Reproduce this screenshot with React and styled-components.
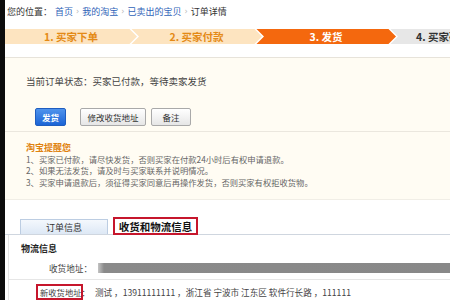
import React from "react";
import styled, { createGlobalStyle } from "styled-components";

const GlobalStyle = createGlobalStyle`
  html, body {
    margin: 0;
    padding: 0;
    background: #ffffff;
  }
  body {
    font-family: "Noto Sans CJK SC", "DejaVu Sans", sans-serif;
  }
`;

const Page = styled.div`
  width: 445px;
  height: 300px;
  overflow: hidden;
  border-left: 5px solid #0c0c0c;
  background: #ffffff;
  display: flex;
  flex-direction: column;
`;

const Crumbs = styled.div`
  height: 24px;
  padding: 0 2px;
  display: flex;
  align-items: center;
  gap: 3px;
  font-size: 9px;
  color: #333;
`;

const CrumbLink = styled.a`
  color: ${(p) => (p.current ? "#333" : "#2f63b8")};
  text-decoration: none;
`;

const Sep = styled.span`
  color: #b9b9b9;
  font-family: "DejaVu Sans", sans-serif;
  font-size: 8px;
`;

const Steps = styled.div`
  margin-top: 6px;
  height: 17px;
  display: flex;
  overflow: hidden;
`;

const Step = styled.div`
  flex: 0 0 ${(p) => p.w}px;
  margin-left: ${(p) => (p.first ? 0 : -6)}px;
  display: flex;
  align-items: center;
  justify-content: ${(p) => (p.last ? "flex-start" : "center")};
  padding-left: ${(p) => (p.last ? 26 : 0)}px;
  box-sizing: border-box;
  white-space: nowrap;
  font-size: 10.5px;
  font-weight: bold;
  background: ${(p) => p.bg};
  color: ${(p) => p.fg};
  clip-path: ${(p) =>
    p.first
      ? "polygon(0 0, calc(100% - 8px) 0, 100% 50%, calc(100% - 8px) 100%, 0 100%)"
      : p.last
      ? "polygon(0 0, 100% 0, 100% 100%, 0 100%, 8px 50%)"
      : "polygon(0 0, calc(100% - 8px) 0, 100% 50%, calc(100% - 8px) 100%, 0 100%, 8px 50%)"};
`;

const StatusPanel = styled.div`
  margin-top: 13px;
  height: 78px;
  border-top: 1px solid #e7e3da;
  border-bottom: 1px solid #ebe7de;
  background: #fffcf3;
  padding: 16px 0 0 21px;
  box-sizing: border-box;
`;

const StatusText = styled.div`
  font-size: 9.5px;
  color: #444;
  line-height: 14px;
`;

const Buttons = styled.div`
  margin-top: 20px;
  margin-left: 9px;
  display: flex;
  gap: 5px;
`;

const Button = styled.button`
  height: 18px;
  padding: 0;
  width: ${(p) => p.w}px;
  font-family: inherit;
  font-size: 8.5px;
  font-weight: ${(p) => (p.primary ? "bold" : "normal")};
  border-radius: 2px;
  border: 1px solid ${(p) => (p.primary ? "#1f5dbf" : "#a9a9a9")};
  background: ${(p) =>
    p.primary
      ? "linear-gradient(#4f93ec, #1b64d6)"
      : "linear-gradient(#ffffff, #e6e6e6)"};
  color: ${(p) => (p.primary ? "#fff" : "#333")};
  margin-right: ${(p) => p.mr || 0}px;
`;

const TipsPanel = styled.div`
  height: 72px;
  background: #fffcf3;
  border-bottom: 1px solid #f1eee6;
  padding: 10px 0 0 21px;
  box-sizing: border-box;
`;

const TipsTitle = styled.div`
  font-size: 9px;
  font-weight: bold;
  color: #e0820f;
  line-height: 12px;
`;

const TipLine = styled.div`
  font-size: 8.3px;
  color: #666;
  line-height: 11.5px;
  white-space: nowrap;
`;

const Tabs = styled.div`
  margin-top: 17px;
  padding-left: 15px;
  height: 17px;
  display: flex;
  align-items: flex-end;
  gap: 5px;
  border-bottom: 1px solid #cfd6df;
`;

const Tab = styled.div`
  box-sizing: border-box;
  width: ${(p) => p.w}px;
  height: ${(p) => (p.active ? 18 : 15)}px;
  display: flex;
  align-items: center;
  justify-content: center;
  font-size: ${(p) => (p.active ? "10.5px" : "9px")};
  font-weight: ${(p) => (p.active ? "bold" : "normal")};
  color: ${(p) => (p.active ? "#111" : "#333")};
  background: ${(p) =>
    p.active ? "#ffffff" : "linear-gradient(#f4f8fd, #dde8f5)"};
  border: ${(p) => (p.active ? "2px solid #c6162c" : "1px solid #bccde2")};
  border-bottom: ${(p) => (p.active ? "2px solid #c6162c" : "none")};
  margin-bottom: ${(p) => (p.active ? -1 : 0)}px;
`;

const Content = styled.div`
  border-left: 1px solid #e4e4e4;
  margin-left: 3px;
  padding-top: 7px;
`;

const SectionTitle = styled.div`
  padding-left: 12px;
  font-size: 9px;
  font-weight: bold;
  color: #222;
  line-height: 14px;
`;

const Row = styled.div`
  display: flex;
  align-items: center;
  height: ${(p) => p.h}px;
  border-top: ${(p) => (p.divided ? "1px solid #e6e6e6" : "none")};
`;

const Label = styled.div`
  margin-left: ${(p) => p.ml}px;
  font-size: 8.6px;
  color: #444;
  white-space: nowrap;
  line-height: 12px;
`;

const MarkedLabel = styled.div`
  box-sizing: border-box;
  width: 47px;
  height: 16px;
  margin-left: ${(p) => p.ml}px;
  margin-top: 4px;
  padding-left: 2px;
  border: 2px solid #c6162c;
  font-size: 8.3px;
  color: #444;
  white-space: nowrap;
  line-height: 12px;
`;

const Redacted = styled.div`
  flex: 1;
  height: 10px;
  margin-left: 6px;
  background: linear-gradient(90deg, #c4c4c4 0, #8a8a8a 6px, #888 100%);
`;

const Value = styled.div`
  margin-left: 12px;
  margin-top: 4px;
  font-size: 8.6px;
  color: #444;
  white-space: nowrap;
`;

const steps = [
  { w: 132, bg: "#fde4c0", fg: "#e48a16", text: "1. 买家下单" },
  { w: 131, bg: "#fde4c0", fg: "#e48a16", text: "2. 买家付款" },
  { w: 140, bg: "#f4680e", fg: "#ffffff", text: "3. 发货" },
  { w: 100, bg: "#e7e7e7", fg: "#333333", text: "4. 买家确认收货" },
];

const tips = [
  "1、买家已付款，请尽快发货，否则买家在付款24小时后有权申请退款。",
  "2、如果无法发货，请及时与买家联系并说明情况。",
  "3、买家申请退款后，须征得买家同意后再操作发货，否则买家有权拒收货物。",
];

const App = () => {
  return (
    <>
      <GlobalStyle />
      <Page>
        <Crumbs>
          <span>您的位置：</span>
          <CrumbLink>首页</CrumbLink>
          <Sep>›</Sep>
          <CrumbLink>我的淘宝</CrumbLink>
          <Sep>›</Sep>
          <CrumbLink>已卖出的宝贝</CrumbLink>
          <Sep>›</Sep>
          <CrumbLink current>订单详情</CrumbLink>
        </Crumbs>

        <Steps>
          {steps.map((s, i) => (
            <Step
              key={s.text}
              w={s.w}
              bg={s.bg}
              fg={s.fg}
              first={i === 0}
              last={i === steps.length - 1}
            >
              {s.text}
            </Step>
          ))}
        </Steps>

        <StatusPanel>
          <StatusText>当前订单状态：买家已付款，等待卖家发货</StatusText>
          <Buttons>
            <Button primary w={31} mr={9}>
              发货
            </Button>
            <Button w={66}>修改收货地址</Button>
            <Button w={40}>备注</Button>
          </Buttons>
        </StatusPanel>

        <TipsPanel>
          <TipsTitle>淘宝提醒您</TipsTitle>
          {tips.map((t) => (
            <TipLine key={t}>{t}</TipLine>
          ))}
        </TipsPanel>

        <Tabs>
          <Tab w={88}>订单信息</Tab>
          <Tab active w={85}>
            收货和物流信息
          </Tab>
        </Tabs>

        <Content>
          <SectionTitle>物流信息</SectionTitle>
          <Row h={23}>
            <Label ml={40}>收货地址：</Label>
            <Redacted />
          </Row>
          <Row h={20} divided>
            <MarkedLabel ml={27}>新收货地址：</MarkedLabel>
            <Value>测试 ，13911111111 ，浙江省 宁波市 江东区 软件行长路 ，111111</Value>
          </Row>
        </Content>
      </Page>
    </>
  );
};

export default App;
